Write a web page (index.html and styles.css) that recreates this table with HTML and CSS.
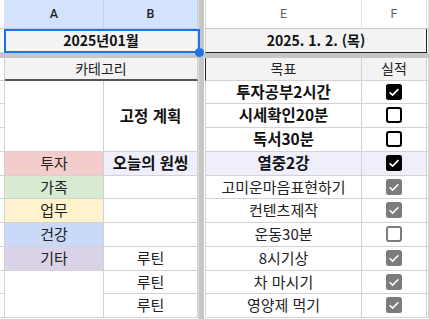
FILE: index.html
```html
<!DOCTYPE html>
<html lang="ko">
<head>
<meta charset="utf-8">
<link rel="stylesheet" href="styles.css">
</head>
<body>
<div class="sheet">
  <div class="vdiv"></div>
  <div class="hband"></div>

  <div class="c hd sl"></div>
  <div class="c hd sel">A</div>
  <div class="c hd sel">B</div>
  <div class="c hd ecol">E</div>
  <div class="c hd">F</div>
  <div class="c hd sl"></div>

  <div class="c sl"></div>
  <div class="c grey b span2">2025년01월</div>
  <div class="c grey b span2 ecol date">2025. 1. 2. (목)</div>
  <div class="c sl"></div>

  <div class="c sl"></div>
  <div class="c grey span2 thick">카테고리</div>
  <div class="c grey ecol darkl">목표</div>
  <div class="c grey">실적</div>
  <div class="c sl"></div>

  <div class="c sl"></div>
  <div class="c span3"></div>
  <div class="c span3 b mid">고정 계획</div>
  <div class="c b big ecol">투자공부2시간</div>
  <div class="c"><svg class="cb" viewBox="0 0 16 16"><rect width="16" height="16" rx="2.5" fill="#000"/><path d="M3.6 8.3 L6.6 11.1 L12.4 5.2" stroke="#fff" stroke-width="1.7" fill="none"/></svg></div>
  <div class="c sl"></div>

  <div class="c sl"></div>
  <div class="c b big ecol">시세확인20분</div>
  <div class="c"><svg class="cb" viewBox="0 0 16 16"><rect x="1" y="1" width="14" height="14" rx="2" fill="#fff" stroke="#000" stroke-width="2"/></svg></div>
  <div class="c sl"></div>

  <div class="c sl"></div>
  <div class="c b big ecol">독서30분</div>
  <div class="c"><svg class="cb" viewBox="0 0 16 16"><rect x="1" y="1" width="14" height="14" rx="2" fill="#fff" stroke="#000" stroke-width="2"/></svg></div>
  <div class="c sl"></div>

  <div class="c sl"></div>
  <div class="c pink body">투자</div>
  <div class="c lav b mid">오늘의 원씽</div>
  <div class="c lav b big ecol">열중2강</div>
  <div class="c lav"><svg class="cb" viewBox="0 0 16 16"><rect width="16" height="16" rx="2.5" fill="#000"/><path d="M3.6 8.3 L6.6 11.1 L12.4 5.2" stroke="#fff" stroke-width="1.7" fill="none"/></svg></div>
  <div class="c sl"></div>

  <div class="c sl"></div>
  <div class="c green body">가족</div>
  <div class="c"></div>
  <div class="c body ecol">고미운마음표현하기</div>
  <div class="c"><svg class="cb" viewBox="0 0 16 16"><rect width="16" height="16" rx="2.5" fill="#7c7c7c"/><path d="M3.6 8.3 L6.6 11.1 L12.4 5.2" stroke="#fff" stroke-width="1.5" fill="none"/></svg></div>
  <div class="c sl"></div>

  <div class="c sl"></div>
  <div class="c yellow body">업무</div>
  <div class="c"></div>
  <div class="c body ecol">컨텐츠제작</div>
  <div class="c"><svg class="cb" viewBox="0 0 16 16"><rect width="16" height="16" rx="2.5" fill="#7c7c7c"/><path d="M3.6 8.3 L6.6 11.1 L12.4 5.2" stroke="#fff" stroke-width="1.5" fill="none"/></svg></div>
  <div class="c sl"></div>

  <div class="c sl"></div>
  <div class="c blue body">건강</div>
  <div class="c"></div>
  <div class="c body ecol">운동30분</div>
  <div class="c"><svg class="cb" viewBox="0 0 16 16"><rect x="1" y="1" width="14" height="14" rx="2" fill="#fff" stroke="#7c7c7c" stroke-width="2"/></svg></div>
  <div class="c sl"></div>

  <div class="c sl"></div>
  <div class="c purple body">기타</div>
  <div class="c body">루틴</div>
  <div class="c body ecol">8시기상</div>
  <div class="c"><svg class="cb" viewBox="0 0 16 16"><rect width="16" height="16" rx="2.5" fill="#7c7c7c"/><path d="M3.6 8.3 L6.6 11.1 L12.4 5.2" stroke="#fff" stroke-width="1.5" fill="none"/></svg></div>
  <div class="c sl"></div>

  <div class="c sl"></div>
  <div class="c span2r"></div>
  <div class="c body">루틴</div>
  <div class="c body ecol">차 마시기</div>
  <div class="c"><svg class="cb" viewBox="0 0 16 16"><rect width="16" height="16" rx="2.5" fill="#7c7c7c"/><path d="M3.6 8.3 L6.6 11.1 L12.4 5.2" stroke="#fff" stroke-width="1.5" fill="none"/></svg></div>
  <div class="c sl"></div>

  <div class="c sl"></div>
  <div class="c body">루틴</div>
  <div class="c body ecol">영양제 먹기</div>
  <div class="c"><svg class="cb" viewBox="0 0 16 16"><rect width="16" height="16" rx="2.5" fill="#7c7c7c"/><path d="M3.6 8.3 L6.6 11.1 L12.4 5.2" stroke="#fff" stroke-width="1.5" fill="none"/></svg></div>
  <div class="c sl"></div>

  <div class="selection"></div>
  <div class="handle"></div>
</div>
</body>
</html>
```
FILE: styles.css
```css
* { box-sizing: border-box; }
html, body { margin: 0; padding: 0; background: #fff; overflow: hidden; }
body {
  width: 429px;
  height: 319px;
  font-family: "Noto Sans CJK KR", "Noto Sans", sans-serif;
  font-size: 14px;
  color: #222;
}
.sheet {
  position: relative;
  display: grid;
  grid-template-columns: 5px 99px 94px 7px 157px 65px 2px;
  grid-template-rows: 29px 24px 5px 23px 23px 24px 24px 24px 23px 24px 24px 24px 23px 24px 1px;
}
.vdiv {
  grid-column: 4;
  grid-row: 1 / -1;
  background: #c6c6c6;
  border-left: 1px solid #dcdcdc;
  border-right: 1px solid #fff;
}
.hband {
  grid-column: 1 / -1;
  grid-row: 3;
  background: #c6c6c6;
}
.c {
  border-right: 1px solid #d2d2d2;
  border-bottom: 1px solid #d2d2d2;
  display: flex;
  align-items: center;
  justify-content: center;
  white-space: nowrap;
  line-height: 1.15;
  padding-bottom: 1px;
  min-width: 0;
  min-height: 0;
}
.ecol { border-left: 1px solid #d2d2d2; }
.hd {
  font-family: Roboto, "Noto Sans", sans-serif;
  font-size: 12.5px;
  color: #5f6368;
  border-bottom-color: #c4c7c5;
  border-right-color: #e1e1e1;
  padding-top: 1px;
}
.hd.sel { background: #d3e3fd; color: #1f1f1f; font-weight: 500; border-right-color: #c8cfd8; }
.grey { background: #f3f3f3; }
.b { font-weight: 700; color: #111; }
.body { font-size: 15px; }
.mid { font-size: 15.5px; }
.big { font-size: 15.5px; }
.span2 { grid-column: span 2; }
.span3 { grid-row: span 3; }
.span2r { grid-row: span 2; }
.date { border-bottom: 1px solid #222; border-right: 1px solid #222; }
.thick { border-bottom: 2px solid #555; }
.darkl { border-left-color: #222; }
.pink { background: #f4cccc; }
.green { background: #d9ead3; }
.yellow { background: #fff2cc; }
.blue { background: #c9daf8; }
.purple { background: #d9d2e9; }
.lav { background: #eeeffb; }
.cb { width: 16px; height: 16px; display: block; }
.selection {
  position: absolute;
  left: 4px;
  top: 29px;
  width: 196px;
  height: 24px;
  border: 2px solid #1a73e8;
  pointer-events: none;
}
.handle {
  position: absolute;
  left: 195px;
  top: 48px;
  width: 9px;
  height: 9px;
  border-radius: 50%;
  background: #1a73e8;
}
```
